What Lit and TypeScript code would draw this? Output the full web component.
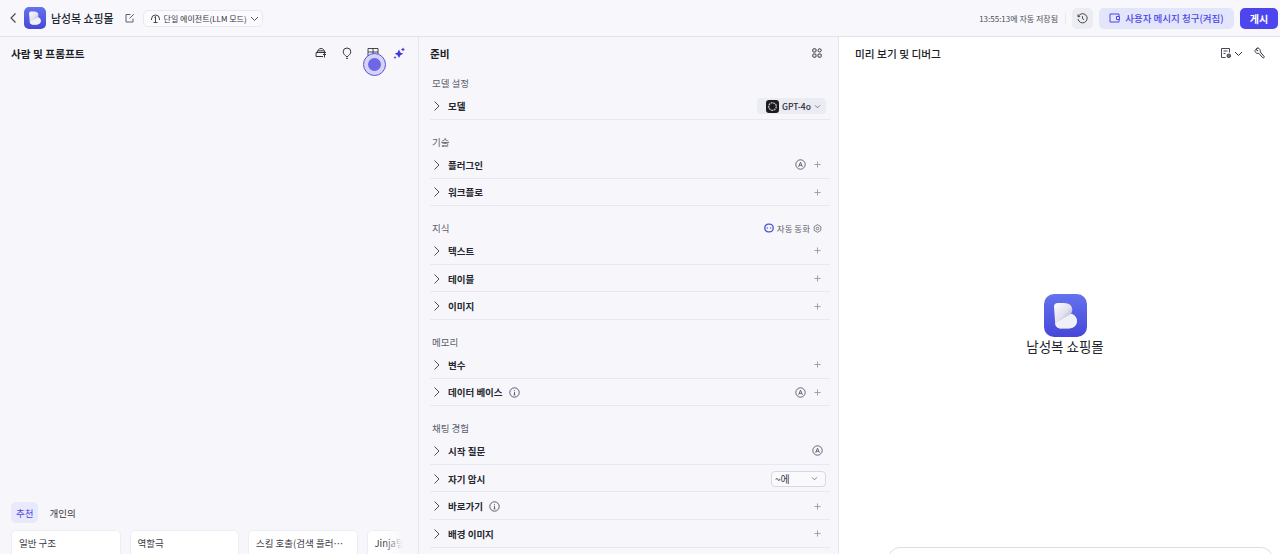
import { LitElement, html, css } from "lit";
import { customElement } from "lit/decorators.js";

const chev = html`<svg class="chev" width="12" height="12" viewBox="0 0 12 12" fill="none" stroke="#4a4d5c" stroke-width="1"><path d="M3.500 1.500 8 6l-4.500 4.500"/></svg>`;
const plus = html`<svg class="ic" width="7" height="7" viewBox="0 0 8 8" stroke="#9a9dab" stroke-width="1.100"><path d="M4 .5v7M.5 4h7"/></svg>`;
const auto = html`<svg class="ic" width="11" height="11" viewBox="0 0 11 11" fill="none" stroke="#55586a" stroke-width=".9"><circle cx="5.500" cy="5.500" r="4.700"/><path d="M3.600 7.800 5.500 3.200l1.900 4.600M4.200 6.300h2.600"/></svg>`;
const info = html`<svg class="ic" width="11" height="11" viewBox="0 0 11 11" fill="none" stroke="#4a4d5c" stroke-width=".9"><circle cx="5.500" cy="5.500" r="4.700"/><path d="M5.500 4.800v3M4.600 7.900h1.800M5.500 3v.8"/></svg>`;

let logoId = 0;
function logo(size: number) {
  const id = `lg${logoId++}`;
  return html`<svg width=${size} height=${size} viewBox="0 0 43 43">
    <defs>
      <linearGradient id="${id}a" x1="0" y1="0" x2="0" y2="1"><stop offset="0" stop-color="#6473ee"/><stop offset="1" stop-color="#4746d8"/></linearGradient>
      <linearGradient id="${id}b" x1="0.1" y1="0.1" x2="0.7" y2="0.7"><stop offset="0" stop-color="#f6f6fb"/><stop offset="0.55" stop-color="#e2e2f0"/><stop offset="1" stop-color="#a6a6cc"/></linearGradient>
    </defs>
    <rect width="43" height="43" rx="10" fill="url(#${id}a)"/>
    <path d="M10 12.500C10 10.500 11.500 9 13.500 9H20c5 0 8.300 2.800 8.300 6.500 0 1.800-.5 3.200-1.300 4.300 3.600 1 6 3.700 6 7.200 0 4.500-3.700 7.500-8.500 7.500H17c-3.500 0-5.500-2.200-5.800-5z" fill="url(#${id}b)"/>
    <path d="M11.200 29.500 27 19.800c3.600 1 6 3.700 6 7.200 0 4.500-3.700 7.500-8.500 7.500H17c-3.500 0-5.500-2.200-5.800-5z" fill="#f0f0f7"/>
  </svg>`;
}

type Row = { label: string; info?: boolean; right?: string };
const sections: { title: string; right?: string; rows: Row[] }[] = [
  { title: "모델 설정", rows: [{ label: "모델", right: "model" }] },
  { title: "기술", rows: [{ label: "플러그인", right: "autoplus" }, { label: "워크플로", right: "plus" }] },
  { title: "지식", right: "sync", rows: [{ label: "텍스트", right: "plus" }, { label: "테이블", right: "plus" }, { label: "이미지", right: "plus" }] },
  { title: "메모리", rows: [{ label: "변수", right: "plus" }, { label: "데이터 베이스", info: true, right: "autoplus" }] },
  { title: "채팅 경험", rows: [{ label: "시작 질문", right: "auto" }, { label: "자기 암시", right: "select" }, { label: "바로가기", info: true, right: "plus" }, { label: "배경 이미지", right: "plus" }] },
];

@customElement("app-root")
export class AppRoot extends LitElement {
  static styles = css`
    :host { display: block; width: 1280px; height: 554px; overflow: hidden; position: relative; background: #f7f7fb; color: #1c1d26;
      font-family: "Noto Sans CJK KR", "Noto Sans", sans-serif; font-size: 10px; }
    .top { height: 36px; border-bottom: 1px solid #e2e3ea; display: flex; align-items: center; padding: 0 2px 0 9px; background: #f8f8fc; }
    .title { font-size: 10.900px; font-weight: 500; margin-left: 5px; color: #23242e; }
    .back { display: flex; margin-right: 6px; }
    .edit { margin: 0 8px 0 11px; display: flex; }
    .mode { height: 15px; display: flex; align-items: center; gap: 3px; padding: 0 3px 0 6px; border: 1px solid #e8e9ef; border-radius: 5px; background: #fbfbfe; font-size: 8px; color: #33343f; }
    .spacer { flex: 1; }
    .saved { font-size: 8px; color: #4b4d5a; padding-right: 7px; border-right: 1px solid #e8e9ef; }
    .hist { width: 21px; height: 21px; border-radius: 5px; background: #ecedf3; margin: 0 6px; display: flex; align-items: center; justify-content: center; }
    .bill { height: 21px; width: 135px; border-radius: 5px; background: #e3e5fb; color: #4c45e8; font-size: 9.500px; font-weight: 500; display: flex; align-items: center; justify-content: center; gap: 5px; }
    .pub { height: 21px; width: 38px; margin-left: 6px; border-radius: 5px; background: #4d46ee; color: #fff; font-size: 10px; font-weight: 700; display: flex; align-items: center; justify-content: center; }
    .main { display: flex; height: 517px; }
    .left { width: 419px; box-sizing: border-box; border-right: 1px solid #e6e7ee; display: flex; flex-direction: column; position: relative; flex: none; }
    .mid { width: 420px; border-right: 1px solid #e6e7ee; flex: none; padding: 0 8px 0 11px; box-sizing: border-box; }
    .right { flex: 1; background: #fff; display: flex; flex-direction: column; position: relative; }
    .head { height: 32px; display: flex; align-items: center; font-size: 10.700px; font-weight: 700; color: #1c1d26; }
    .left .head { padding: 0 13px 0 11px; }
    .head .tools { margin-left: auto; display: flex; align-items: center; gap: 14px; }
    .mid .head { padding-right: 8px; justify-content: space-between; }
    .right .head { padding: 0 14px 0 16px; justify-content: space-between; font-weight: 500; }
    .right .tools { display: flex; align-items: center; gap: 11px; }
    .pair { display: flex; align-items: center; gap: 2px; }
    .dot { position: absolute; left: 362.500px; top: 15.500px; width: 23px; height: 23px; border-radius: 50%; border: 1.500px solid #5a52e0; background: #d5d4f6; box-sizing: border-box; display: flex; align-items: center; justify-content: center; }
    .dot i { width: 13px; height: 13px; border-radius: 50%; background: #6d66e6; display: block; }
    .sec-t { height: 31px; box-sizing: border-box; padding: 13px 8px 0 2px; display: flex; justify-content: space-between; align-items: center; font-size: 9.500px; color: #5b5d6b; }
    .sec-t.first { height: 23.400px; padding-top: 5px; }
    .sync { display: flex; align-items: center; gap: 3px; font-size: 8.500px; color: #5b5d6b; }
    .row { height: 27.600px; box-sizing: border-box; border-bottom: 1px solid #e8e9f0; display: flex; align-items: center; padding: 1px 4px 0 1px; }
    .lbl { font-size: 9.500px; font-weight: 700; color: #25262f; margin-left: 5px; }
    .row .inf { margin-left: 6px; display: flex; }
    .rgt { margin-left: auto; display: flex; align-items: center; gap: 8px; }
    .plus-w { margin-right: 5.500px; display: flex; }
    .auto-only { margin-right: 3px; display: flex; }
    .model { height: 16px; width: 69px; background: #ebecf3; border-radius: 4px; display: flex; align-items: center; gap: 3px; padding-left: 9px; box-sizing: border-box; font-size: 8.500px; font-weight: 500; color: #2a2b35; }
    .select { width: 55px; height: 16px; box-sizing: border-box; border: 1px solid #d7d8e2; border-radius: 4px; display: flex; align-items: center; justify-content: space-between; padding: 0 7px 0 3px; font-size: 10px; color: #3a3b46; background: #fafafd; }
    .tabs { position: absolute; left: 11px; top: 465px; display: flex; gap: 6px; align-items: center; }
    .tab { height: 21px; padding: 0 5px; border-radius: 5px; display: flex; align-items: center; font-size: 9.500px; color: #33343f; }
    .tab.on { background: #e8e9fb; color: #4c45e8; }
    .cards { position: absolute; left: 11px; top: 493px; width: 392px; display: flex; gap: 9px; overflow: hidden; }
    .card { flex: none; width: 109.500px; height: 40px; background: #fff; border: 1px solid #edeef3; box-sizing: border-box; border-radius: 5px; padding: 5px 8px 5px 7px; font-size: 9.500px; color: #3a3b46; white-space: nowrap; overflow: hidden; text-overflow: ellipsis; }
    .fade { position: absolute; right: 0; top: 0; bottom: 0; width: 20px; background: linear-gradient(90deg, rgba(247,247,251,0), #f7f7fb); }
    .center { position: absolute; left: 11px; right: 0; top: 257px; display: flex; flex-direction: column; align-items: center; font-size: 13.500px; color: #22232c; line-height: 19px; }
    .input { position: absolute; left: 49px; top: 510px; width: 385px; height: 40px; border: 1px solid #dcdce6; border-radius: 12px; box-sizing: border-box; background: #fff; }
  `;

  right(r?: string) {
    if (r === "plus") return html`<span class="plus-w">${plus}</span>`;
    if (r === "autoplus") return html`${auto}<span class="plus-w">${plus}</span>`;
    if (r === "auto") return html`<span class="auto-only">${auto}</span>`;
    if (r === "model") return html`<div class="model">
      <svg width="13" height="13" viewBox="0 0 13 13"><rect width="13" height="13" rx="3" fill="#1b1b1f"/><circle cx="6.500" cy="6.500" r="3.800" fill="none" stroke="#b9b9bf" stroke-width="1.300" stroke-dasharray="2 .6"/></svg>
      <span>GPT-4o</span>
      <svg width="7" height="7" viewBox="0 0 7 7" fill="none" stroke="#666" stroke-width=".8"><path d="M1 2.300l2.500 2.500L6 2.300"/></svg></div>`;
    if (r === "select") return html`<div class="select"><span>~에</span>
      <svg width="7" height="7" viewBox="0 0 7 7" fill="none" stroke="#666" stroke-width=".8"><path d="M1 2.300l2.500 2.500L6 2.300"/></svg></div>`;
    return "";
  }

  render() {
    logoId = 0;
    return html`
      <div class="top">
        <span class="back"><svg width="9" height="12" viewBox="0 0 9 12" fill="none" stroke="#3f414f" stroke-width="1.100"><path d="M6.500 1.500 2 6l4.500 4.500"/></svg></span>
        ${logo(22)}
        <span class="title">남성복 쇼핑몰</span>
        <span class="edit"><svg width="10" height="10" viewBox="0 0 10 10" fill="none" stroke="#4b4d5a" stroke-width=".9"><path d="M8 5.500V9H1V1.500h4.500M4.500 5.500 8.800 1.200"/></svg></span>
        <div class="mode">
          <svg width="11" height="11" viewBox="0 0 11 11" fill="none" stroke="#333" stroke-width=".9"><path d="M1.500 6a4 4 0 0 1 8 0M3.500 9.500h4M5.500 3.500v6M4.300 4.500l1.200-1M1.500 6v1M9.500 6v1"/></svg>
          <span>단일 에이전트(LLM 모드)</span>
          <svg width="9" height="9" viewBox="0 0 9 9" fill="none" stroke="#444" stroke-width=".9"><path d="M1 3l3.500 3.500L8 3"/></svg>
        </div>
        <div class="spacer"></div>
        <span class="saved">13:55:13에 자동 저장됨</span>
        <div class="hist"><svg width="11" height="11" viewBox="0 0 11 11" fill="none" stroke="#333" stroke-width=".9"><path d="M1.300 3.500A4.600 4.600 0 1 1 1 6M1 1.500v2.200h2.200M5.500 3.200v2.500l1.500 1"/></svg></div>
        <div class="bill"><svg width="11" height="10" viewBox="0 0 11 10" fill="none" stroke="#4c45e8" stroke-width="1"><path d="M10 3V1H1v8h9V6.500M10.500 3.500H7.500v3h3z"/></svg><span>사용자 메시지 청구(켜짐)</span></div>
        <div class="pub">게시</div>
      </div>
      <div class="main">
        <div class="left">
          <div class="head"><span>사람 및 프롬프트</span>
            <div class="tools">
              <svg width="12" height="12" viewBox="0 0 12 12" fill="none" stroke="#33343f" stroke-width="1"><path d="M2.200 5.500C2.500 3 4 1.500 6 1.500S9.500 3 9.800 5.500M1 5.500h10M1.200 5.500 1 9.500h7M3 3.800h6M11 8l-1.500-1.500L8 8M9.500 6.500v4"/></svg>
              <svg width="12" height="12" viewBox="0 0 12 12" fill="none" stroke="#33343f" stroke-width="1"><path d="M6 1a3.800 3.800 0 0 0-3.800 3.800c0 2 1.500 3.200 3.800 5.200 2.300-2 3.800-3.200 3.800-5.200A3.800 3.800 0 0 0 6 1zM5 11.300h2"/></svg>
              <svg width="12" height="12" viewBox="0 0 12 12" fill="none" stroke="#33343f" stroke-width=".9"><path d="M1 1.500h10v9H1zM6 1.500v9M1 5h10"/></svg>
              <svg width="12" height="12" viewBox="0 0 12 12" fill="#4338e8"><path d="M6 2.500 7.400 5.400 10.300 6.800 7.400 8.200 6 11 4.600 8.200 1.700 6.800l2.900-1.400zM10 .4l.7 1.400 1.300.7-1.300.7-.7 1.400-.7-1.400-1.300-.7 1.300-.7zM2 9l.5 1 1 .5-1 .5-.5 1-.5-1-1-.5 1-.5z"/></svg>
            </div>
          </div>
          <div class="dot"><i></i></div>
          <div class="tabs"><div class="tab on">추천</div><div class="tab">개인의</div></div>
          <div class="cards">
            <div class="card">일반 구조</div><div class="card">역할극</div><div class="card">스킬 호출(검색 플러그인)</div><div class="card">Jinja템플릿</div>
            <div class="fade"></div>
          </div>
        </div>
        <div class="mid">
          <div class="head"><span>준비</span>
            <svg width="10" height="10" viewBox="0 0 10 10" fill="none" stroke="#33343f" stroke-width="1"><rect x=".8" y=".8" width="3.200" height="3.200" rx=".8"/><rect x="6" y=".8" width="3.200" height="3.200" rx="1.600"/><rect x=".8" y="6" width="3.200" height="3.200" rx=".8"/><rect x="6" y="6" width="3.200" height="3.200" rx=".8"/></svg>
          </div>
          ${sections.map((s, i) => html`
            <div class="sec-t ${i === 0 ? "first" : ""}"><span>${s.title}</span>
              ${s.right === "sync" ? html`<span class="sync">
                <svg width="10" height="10" viewBox="0 0 10 10" fill="none" stroke="#4c52d8" stroke-width="1.300"><rect x=".8" y="1.200" width="8.400" height="7.600" rx="3.600"/><path d="M2.800 5h1M6.200 5h1"/></svg>
                <span>자동 동화</span>
                <svg width="9" height="9" viewBox="0 0 9 9" fill="none" stroke="#666" stroke-width=".8"><path d="M4.500.7 7.800 2.600v3.800L4.500 8.300 1.200 6.400V2.600z"/><circle cx="4.500" cy="4.500" r="1.300"/></svg>
              </span>` : ""}
            </div>
            ${s.rows.map((r) => html`
              <div class="row">${chev}<span class="lbl">${r.label}</span>
                ${r.info ? html`<span class="inf">${info}</span>` : ""}
                <div class="rgt">${this.right(r.right)}</div>
              </div>`)}
          `)}
        </div>
        <div class="right">
          <div class="head"><span>미리 보기 및 디버그</span>
            <div class="tools">
              <span class="pair"><svg width="12" height="12" viewBox="0 0 12 12" fill="none" stroke="#33343f" stroke-width=".9"><path d="M5.500 10.500H1.500v-9h8v4M3.500 4h4M3.500 6.500h2"/><circle cx="8.800" cy="8.800" r="1.800" fill="#777"/></svg>
              <svg width="9" height="9" viewBox="0 0 9 9" fill="none" stroke="#33343f" stroke-width="1"><path d="M1 3l3.500 3.500L8 3"/></svg></span>
              <svg width="12" height="12" viewBox="0 0 12 12" fill="none" stroke="#33343f" stroke-width="1"><path d="M3.500 .8 2.200 2.800l1.800 1.200 -1-1M1 3.500c0 1.500 1.200 3 2.800 3l1-.2 4 4.500c.6.500 1.800-.4 1.400-1.200L6.300 5c.4-1.800-.8-3.800-2.800-4.200z"/></svg>
            </div>
          </div>
          <div class="center">${logo(43)}<span>남성복 쇼핑몰</span></div>
          <div class="input"></div>
        </div>
      </div>`;
  }
}
